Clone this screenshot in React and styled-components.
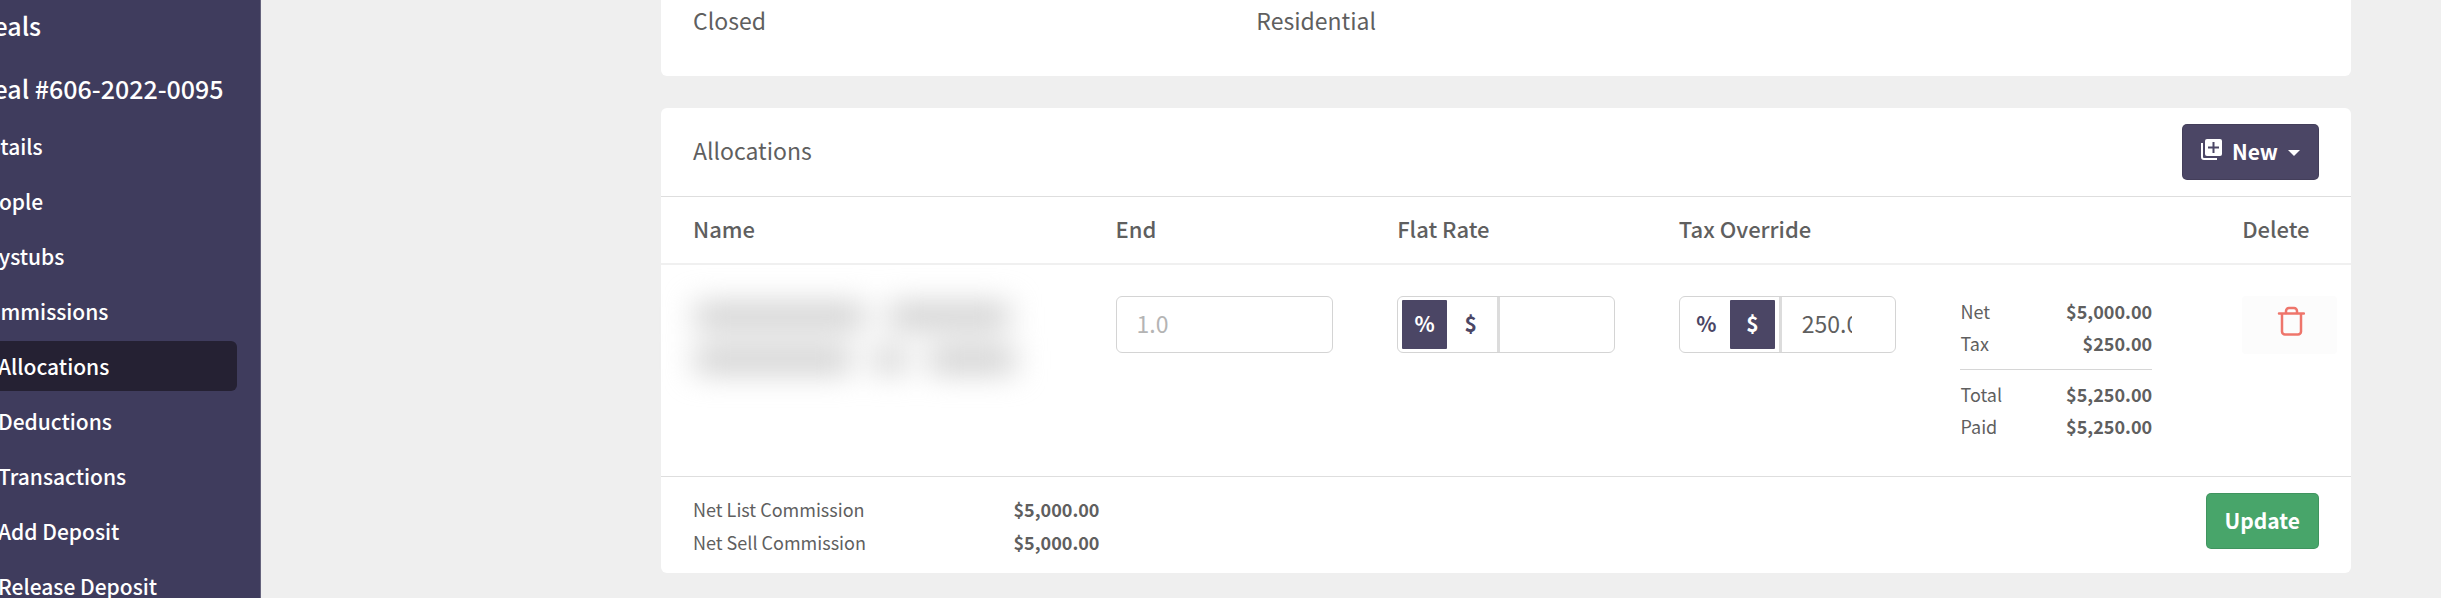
import React from "react";
import styled, { createGlobalStyle, css } from "styled-components";

const GlobalStyle = createGlobalStyle`
  * {
    box-sizing: border-box;
  }
  body {
    margin: 0;
    background: #efefef;
    color: #5f5f5f;
    font-family: "Noto Sans CJK SC", "Open Sans", sans-serif;
    font-size: 23px;
    line-height: 32px;
  }
  button,
  input {
    font: inherit;
  }
`;

const navLinks = [
  "Details",
  "People",
  "Paystubs",
  "Commissions",
];

const commissionLinks = [
  "Allocations",
  "Deductions",
  "Transactions",
  "Add Deposit",
  "Release Deposit",
];

const NewIcon = () => (
  <svg width="21" height="21" viewBox="0 0 21 21" aria-hidden="true">
    <path d="M1 4v14a2 2 0 0 0 2 2h13" fill="none" stroke="#fff" strokeWidth="2" />
    <rect x="4" y="0" width="17" height="17" rx="2" fill="#fff" />
    <path d="M12.500 3v11M7 8.500h11" stroke="#4b4665" strokeWidth="2" />
  </svg>
);

const TrashIcon = () => (
  <svg width="28" height="30" viewBox="0 0 28 30" aria-hidden="true">
    <g fill="none" stroke="#ee756b" strokeWidth="2.500" strokeLinecap="round">
      <path d="M2 7.500h25M5 7.500v18a3 3 0 0 0 3 3h13a3 3 0 0 0 3-3v-18" />
      <path d="M9 7v-2a3 3 0 0 1 3-3h5a3 3 0 0 1 3 3v2" />
    </g>
  </svg>
);

function AmountField({ label, unit, defaultValue }) {
  return (
    <Amount>
      <Units>
        <UnitButton type="button" $active={unit === "%"} aria-pressed={unit === "%"}>
          %
        </UnitButton>
        <UnitButton type="button" $active={unit === "$"} aria-pressed={unit === "$"}>
          $
        </UnitButton>
      </Units>
      <AmountInput aria-label={label} defaultValue={defaultValue} />
    </Amount>
  );
}

export default function App() {
  return (
    <Page>
      <GlobalStyle />
      <Sidebar>
        <NavHeading href="#deals">Deals</NavHeading>
        <NavHeading href="#deal">Deal #606-2022-0095</NavHeading>
        <NavList>
          {navLinks.map((name) => (
            <NavLink key={name} href="#nav">
              {name}
            </NavLink>
          ))}
          {commissionLinks.map((name) => (
            <NavLink key={name} href="#nav" $nested $active={name === "Allocations"}>
              {name}
            </NavLink>
          ))}
        </NavList>
      </Sidebar>
      <Main>
        <Card>
          <DealInfo>
            <span>Closed</span>
            <span>Residential</span>
          </DealInfo>
        </Card>
        <Card>
          <CardHeader>
            <Title>Allocations</Title>
            <Button type="button">
              <NewIcon />
              New
              <Caret />
            </Button>
          </CardHeader>
          <Table>
            <thead>
              <HeadRow>
                <th>Name</th>
                <th>End</th>
                <th>Flat Rate</th>
                <th>Tax Override</th>
                <th aria-label="Totals" />
                <th>Delete</th>
              </HeadRow>
            </thead>
            <tbody>
              <BodyRow>
                <td>
                  <Hidden>
                    <HiddenLine>
                      <Smudge $size={170} />
                      <Smudge $size={120} />
                    </HiddenLine>
                    <HiddenLine>
                      <Smudge $size={156} />
                      <Smudge $size={30} />
                      <Smudge $size={86} />
                    </HiddenLine>
                  </Hidden>
                </td>
                <td>
                  <EndInput aria-label="End" placeholder="1.0" />
                </td>
                <td>
                  <AmountField label="Flat Rate" unit="%" />
                </td>
                <td>
                  <AmountField label="Tax Override" unit="$" defaultValue="250.00" />
                </td>
                <td>
                  <Totals>
                    <dt>Net</dt>
                    <dd>$5,000.00</dd>
                    <dt>Tax</dt>
                    <dd>$250.00</dd>
                    <Rule />
                    <dt>Total</dt>
                    <dd>$5,250.00</dd>
                    <dt>Paid</dt>
                    <dd>$5,250.00</dd>
                  </Totals>
                </td>
                <td>
                  <DeleteButton type="button" aria-label="Delete">
                    <TrashIcon />
                  </DeleteButton>
                </td>
              </BodyRow>
            </tbody>
          </Table>
          <CardFooter>
            <Commissions>
              <dt>Net List Commission</dt>
              <dd>$5,000.00</dd>
              <dt>Net Sell Commission</dt>
              <dd>$5,000.00</dd>
            </Commissions>
            <Button type="submit" $green>
              Update
            </Button>
          </CardFooter>
        </Card>
      </Main>
    </Page>
  );
}

const Page = styled.div`
  display: flex;
  height: 100vh;
  overflow: hidden;
`;

const Sidebar = styled.nav`
  flex: 0 0 261px;
  display: flex;
  flex-direction: column;
  overflow: hidden;
  background: #3f3c5d;
  border-right: 1px solid #65637d;
  color: #fff;
  font-weight: 500;
`;

const NavHeading = styled.a`
  flex: none;
  height: 63px;
  margin-left: -24px;
  padding-top: 9px;
  color: inherit;
  font-size: 25px;
  text-decoration: none;
  white-space: nowrap;
  & + & {
    height: 58px;
  }
`;

const NavList = styled.div`
  display: flex;
  flex-direction: column;
  gap: 5px;
  margin-right: 23px;
`;

const NavLink = styled.a`
  height: 50px;
  margin-left: -26px;
  padding-left: ${({ $nested }) => ($nested ? "24px" : "0")};
  border-radius: 6px;
  background: ${({ $active }) => ($active ? "#252133" : "transparent")};
  color: inherit;
  font-size: 21px;
  line-height: 50px;
  text-decoration: none;
  white-space: nowrap;
`;

const Main = styled.main`
  flex: 1;
  min-width: 0;
  padding: 0 90px 0 400px;
`;

const Card = styled.section`
  background: #fff;
  border-radius: 6px;
  & + & {
    margin-top: 32px;
  }
  &:first-child {
    border-top-left-radius: 0;
    border-top-right-radius: 0;
  }
`;

const DealInfo = styled.div`
  display: grid;
  grid-template-columns: repeat(3, 1fr);
  padding: 4px 0 40px;
  span {
    padding-left: 32px;
  }
`;

const CardHeader = styled.header`
  display: flex;
  align-items: center;
  justify-content: space-between;
  padding: 16px 32px;
  border-bottom: 1px solid #dedede;
`;

const Title = styled.h2`
  margin: 0;
  padding-bottom: 4px;
  font-size: 23px;
  font-weight: 400;
`;

const Button = styled.button`
  display: flex;
  align-items: center;
  gap: 10px;
  height: 56px;
  padding: 0 18px 3px;
  border: 1px solid rgba(0, 0, 0, 0.1);
  border-radius: 5px;
  background: ${({ $green }) => ($green ? "#48a56a" : "#4b4665")};
  color: #fff;
  font-size: 21px;
  font-weight: 700;
  cursor: pointer;
  svg {
    margin-bottom: 3px;
  }
`;

const Caret = styled.span`
  margin-top: 4px;
  border: 6px solid transparent;
  border-top-color: #fff;
  border-bottom: 0;
`;

const Table = styled.table`
  display: block;
  thead,
  tbody {
    display: block;
  }
`;

const row = css`
  display: grid;
  grid-template-columns: 3fr 2fr 2fr 2fr 2fr 1fr;
  th,
  td {
    min-width: 0;
    padding: 0 32px;
  }
`;

const HeadRow = styled.tr`
  ${row}
  padding: 15px 0 19px;
  border-bottom: 2px solid #f0f0f0;
  th {
    font-size: 22px;
    font-weight: 500;
    text-align: left;
    white-space: nowrap;
  }
`;

const BodyRow = styled.tr`
  ${row}
  padding: 31px 0 35px;
`;

const Hidden = styled.div`
  display: grid;
  gap: 20px;
  padding: 8px 0 0 2px;
  filter: blur(15px);
`;

const HiddenLine = styled.div`
  display: flex;
  gap: 24px;
`;

const Smudge = styled.span`
  width: ${({ $size }) => $size}px;
  height: 24px;
  background: #cacaca;
`;

const field = css`
  width: 100%;
  height: 57px;
  border: 1px solid #d4d4d4;
  border-radius: 6px;
  background: #fff;
`;

const EndInput = styled.input`
  ${field}
  display: block;
  padding: 0 20px 3px;
  color: #5f5f5f;
  &::placeholder {
    color: #b4b4b4;
  }
`;

const Amount = styled.div`
  ${field}
  display: flex;
  overflow: hidden;
`;

const Units = styled.div`
  display: flex;
  gap: 1px;
  padding: 3px 4px;
  border-right: 3px solid #dcdcdc;
`;

const UnitButton = styled.button`
  width: 45px;
  padding: 0 0 3px;
  border: 0;
  border-radius: 1px;
  background: ${({ $active }) => ($active ? "#4b4665" : "#fff")};
  color: ${({ $active }) => ($active ? "#fff" : "#4b4665")};
  font-size: 21px;
  font-weight: 700;
  cursor: pointer;
`;

const AmountInput = styled.input`
  flex: 1;
  min-width: 0;
  padding: 0 43px 3px 20px;
  border: 0;
  outline: 0;
  background: transparent;
  color: #5f5f5f;
`;

const list = css`
  display: grid;
  grid-template-columns: 1fr auto;
  margin: 0;
  font-size: 18px;
  dd {
    margin: 0;
    font-weight: 700;
    text-align: right;
  }
`;

const Totals = styled.dl`
  ${list}
  row-gap: 2px;
  margin-right: 26px;
  line-height: 30px;
`;

const Rule = styled.div`
  grid-column: 1 / -1;
  height: 1px;
  margin: 9px 0 7px;
  background: #d6d6d6;
`;

const DeleteButton = styled.button`
  display: grid;
  place-items: center;
  width: 95px;
  height: 58px;
  padding: 0 0 8px 2px;
  border: 0;
  border-radius: 4px;
  background: #fcfcfc;
  cursor: pointer;
`;

const CardFooter = styled.footer`
  display: flex;
  align-items: flex-start;
  justify-content: space-between;
  padding: 16px 32px 14px;
  border-top: 1px solid #dedede;
`;

const Commissions = styled.dl`
  ${list}
  width: 25%;
  line-height: 33px;
`;
